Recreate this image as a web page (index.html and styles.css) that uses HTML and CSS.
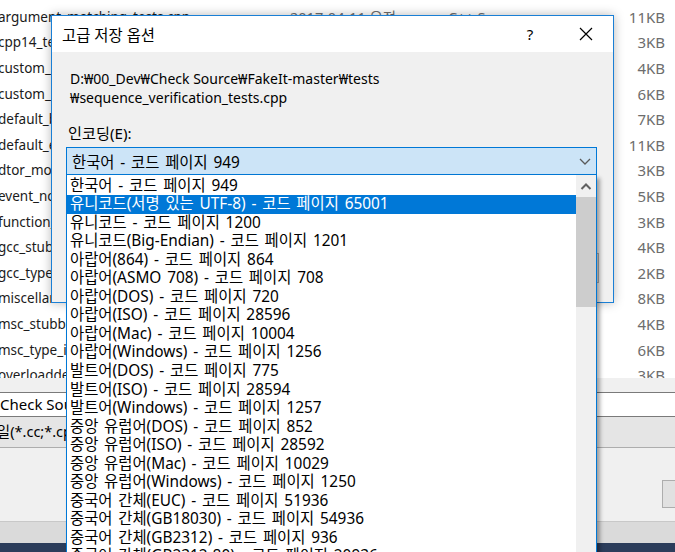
FILE: index.html
```html
<!DOCTYPE html>
<html lang="ko">
<head>
<meta charset="utf-8">
<title>고급 저장 옵션</title>
<link rel="stylesheet" href="styles.css">
</head>
<body>
<div class="explorer">
  <div class="files">
    <div class="row"><span class="name">argument_matching_tests.cpp</span><span class="date">2017-04-11 오전</span><span class="type">C++ Source</span><span class="size">11KB</span></div>
    <div class="row"><span class="name">cpp14_tests.cpp</span><span class="date">2017-04-11 오전</span><span class="type">C++ Source</span><span class="size">3KB</span></div>
    <div class="row"><span class="name">custom_matcher_tests.cpp</span><span class="date">2017-04-11 오전</span><span class="type">C++ Source</span><span class="size">4KB</span></div>
    <div class="row"><span class="name">custom_parameter_tests.cpp</span><span class="date">2017-04-11 오전</span><span class="type">C++ Source</span><span class="size">6KB</span></div>
    <div class="row"><span class="name">default_behaviore_tests.cpp</span><span class="date">2017-04-11 오전</span><span class="type">C++ Source</span><span class="size">7KB</span></div>
    <div class="row"><span class="name">default_event_formatting_tests.cpp</span><span class="date">2017-04-11 오전</span><span class="type">C++ Source</span><span class="size">11KB</span></div>
    <div class="row"><span class="name">dtor_mocking_tests.cpp</span><span class="date">2017-04-11 오전</span><span class="type">C++ Source</span><span class="size">3KB</span></div>
    <div class="row"><span class="name">event_notification_tests.cpp</span><span class="date">2017-04-11 오전</span><span class="type">C++ Source</span><span class="size">5KB</span></div>
    <div class="row"><span class="name">function_tests.cpp</span><span class="date">2017-04-11 오전</span><span class="type">C++ Source</span><span class="size">3KB</span></div>
    <div class="row"><span class="name">gcc_stubbing_multiple_values_tests.cpp</span><span class="date">2017-04-11 오전</span><span class="type">C++ Source</span><span class="size">4KB</span></div>
    <div class="row"><span class="name">gcc_type_info_tests.cpp</span><span class="date">2017-04-11 오전</span><span class="type">C++ Source</span><span class="size">2KB</span></div>
    <div class="row"><span class="name">miscellaneous_tests.cpp</span><span class="date">2017-04-11 오전</span><span class="type">C++ Source</span><span class="size">8KB</span></div>
    <div class="row"><span class="name">msc_stubbing_multiple_values_tests.cpp</span><span class="date">2017-04-11 오전</span><span class="type">C++ Source</span><span class="size">4KB</span></div>
    <div class="row"><span class="name">msc_type_info_tests.cpp</span><span class="date">2017-04-11 오전</span><span class="type">C++ Source</span><span class="size">6KB</span></div>
    <div class="row"><span class="name">overloadded_methods_tests.cpp</span><span class="date">2017-04-11 오전</span><span class="type">C++ Source</span><span class="size">3KB</span></div>
  </div>
  <div class="savepanel">
    <div class="namefield">Check Source</div>
    <div class="typefield">C++ 파일(*.cc;*.cpp;*.cxx;*.h)</div>
    <div class="actions"><div class="btn"></div></div>
  </div>
  <div class="band"></div>
  <div class="taskbar"></div>
</div>

<div class="dialog">
  <div class="titlebar">
    <span class="title">고급 저장 옵션</span>
    <span class="help">?</span>
    <svg class="close" width="14" height="14" viewBox="0 0 14 14"><path d="M1 1 L13 13 M13 1 L1 13" stroke="#000" stroke-width="1.2" fill="none"/></svg>
  </div>
  <div class="dbody">
    <p class="path">D:₩00_Dev₩Check Source₩FakeIt-master₩tests<br>₩sequence_verification_tests.cpp</p>
    <p class="label">인코딩(E):</p>
    <div class="combo">
      <span>한국어 - 코드 페이지 949</span>
      <svg class="chev" width="12" height="7" viewBox="0 0 12 7"><path d="M1 1 L6 6 L11 1" stroke="#5a5a5a" stroke-width="1.3" fill="none"/></svg>
    </div>
    <div class="hidden-row"><div class="hbox"></div></div>
  </div>
</div>

<div class="dropdown">
  <ul class="items">
    <li>한국어 - 코드 페이지 949</li>
    <li class="sel">유니코드(서명 있는 UTF-8) - 코드 페이지 65001</li>
    <li>유니코드 - 코드 페이지 1200</li>
    <li>유니코드(Big-Endian) - 코드 페이지 1201</li>
    <li>아랍어(864) - 코드 페이지 864</li>
    <li>아랍어(ASMO 708) - 코드 페이지 708</li>
    <li>아랍어(DOS) - 코드 페이지 720</li>
    <li>아랍어(ISO) - 코드 페이지 28596</li>
    <li>아랍어(Mac) - 코드 페이지 10004</li>
    <li>아랍어(Windows) - 코드 페이지 1256</li>
    <li>발트어(DOS) - 코드 페이지 775</li>
    <li>발트어(ISO) - 코드 페이지 28594</li>
    <li>발트어(Windows) - 코드 페이지 1257</li>
    <li>중앙 유럽어(DOS) - 코드 페이지 852</li>
    <li>중앙 유럽어(ISO) - 코드 페이지 28592</li>
    <li>중앙 유럽어(Mac) - 코드 페이지 10029</li>
    <li>중앙 유럽어(Windows) - 코드 페이지 1250</li>
    <li>중국어 간체(EUC) - 코드 페이지 51936</li>
    <li>중국어 간체(GB18030) - 코드 페이지 54936</li>
    <li>중국어 간체(GB2312) - 코드 페이지 936</li>
    <li>중국어 간체(GB2312-80) - 코드 페이지 20936</li>
  </ul>
  <div class="scrollbar">
    <div class="arrow"><svg width="12" height="7" viewBox="0 0 12 7"><path d="M1.5 6 L6 1.5 L10.5 6" stroke="#606060" stroke-width="2" fill="none"/></svg></div>
    <div class="thumb"></div>
  </div>
</div>
</body>
</html>
```
FILE: styles.css
```css
* { box-sizing: border-box; margin: 0; padding: 0; }
html, body { width: 675px; height: 552px; overflow: hidden; }
body {
  position: relative;
  background: #fff;
  font-family: "Noto Sans", "Noto Sans CJK KR", sans-serif;
  color: #000;
}

/* background explorer */
.explorer { display: flex; flex-direction: column; height: 552px; }
.files { height: 378px; overflow: hidden; padding-top: 4px; background: #fff; }
.row {
  display: grid;
  grid-template-columns: 292px 158px 150px 1fr;
  height: 25.6px;
  align-items: center;
  width: 667px;
  margin-left: -2px;
  font-size: 13.5px;
  white-space: nowrap;
}
.row span { overflow: hidden; }
.name { color: #1b1b1b; font-size: 13.5px; }
.date, .type { color: #6d6d6d; font-size: 14.5px; }
.size { color: #6d6d6d; text-align: right; font-size: 15px; }

.savepanel { flex: 1; background: #f0f0f0; padding-top: 14px; display: flex; flex-direction: column; }
.namefield {
  height: 25px;
  margin-left: -6px;
  width: 700px;
  background: #fff;
  border: 1px solid #7a7a7a;
  font-size: 15px;
  line-height: 22px;
  padding-left: 5px;
  white-space: nowrap;
}
.typefield {
  height: 31px;
  margin-left: -50px;
  width: 750px;
  background: #e5e5e5;
  border: 1px solid #adadad;
  border-top: none;
  font-size: 14.5px;
  line-height: 28px;
  padding-left: 3px;
  white-space: nowrap;
}
.actions { display: flex; justify-content: flex-end; margin-top: 32px; margin-right: -30px; }
.btn { width: 43px; height: 28px; background: #e1e1e1; border: 1px solid #adadad; }
.band { height: 22px; background: #dadada; border-top: 1px solid #c8c8c8; }
.taskbar { height: 9px; background: #2c3d5b; }

/* dialog */
.dialog {
  position: absolute;
  left: 51px; top: 15px;
  width: 563px; height: 288px;
  border: 1px solid #1a7fd5;
  background: #f0f0f0;
  box-shadow: 0 0 10px rgba(0,0,0,0.28);
  display: flex; flex-direction: column;
}
.titlebar {
  height: 36px;
  background: #fff;
  display: flex; align-items: center;
  padding-left: 10px;
  font-size: 15.4px;
}
.title { flex: 1; }
.help { width: 20px; text-align: center; margin-right: 39px; font-size: 15px; }
.close { margin-right: 20px; }
.dbody { flex: 1; padding: 16px 16px 0 14px; font-size: 14px; }
.path { line-height: 19px; padding-left: 4px; margin-top: 0.5px; }
.label { line-height: 19px; padding-left: 2px; margin-top: 17px; font-size: 15.2px; }
.combo {
  margin-top: 4.5px;
  width: 531px; height: 28px;
  background: #cce4f7;
  border: 1px solid #0078d7;
  display: flex; align-items: center; justify-content: space-between;
  padding: 0 5px 0 5px;
  font-size: 15.4px;
  word-spacing: 1.8px;
  white-space: nowrap;
}
.hidden-row { display: flex; justify-content: flex-end; margin-top: 78px; margin-right: -2px; }
.hbox { width: 110px; height: 30px; background: #e1e1e1; border: 1px solid #adadad; }

/* dropdown */
.dropdown {
  position: absolute;
  left: 66px; top: 175px;
  width: 531px; height: 420px;
  background: #fff;
  border: 1px solid #0078d7;
  border-top: none;
  display: flex;
  box-shadow: 3px 3px 4px rgba(0,0,0,0.35);
}
.items { flex: 1; list-style: none; padding-top: 1.5px; font-size: 15.4px; word-spacing: 1.8px; }
.items li { height: 18.55px; line-height: 18.55px; padding-left: 3px; white-space: nowrap; overflow: hidden; }
.items li.sel { background: #0078d7; color: #fff; }
.scrollbar { width: 20px; background: #f0f0f0; display: flex; flex-direction: column; }
.arrow { height: 22px; display: flex; align-items: center; justify-content: center; }
.thumb { height: 110px; background: #cdcdcd; }
```
